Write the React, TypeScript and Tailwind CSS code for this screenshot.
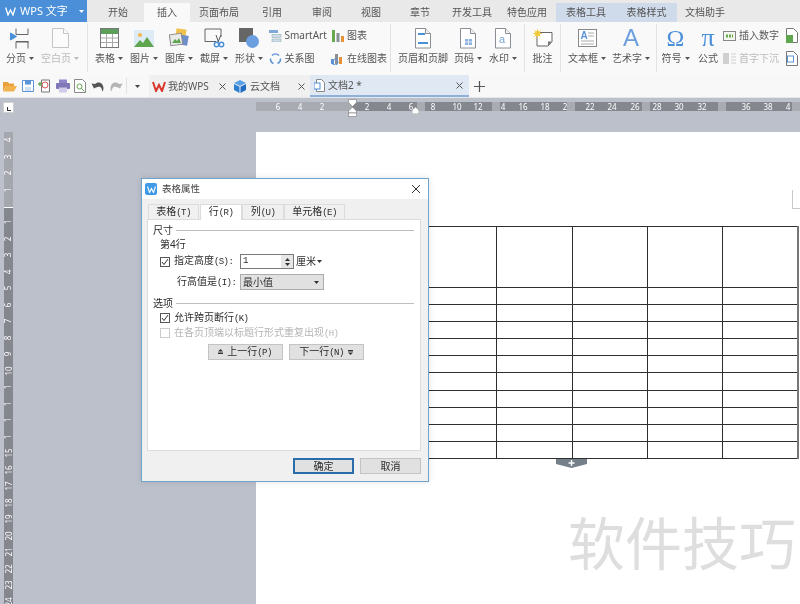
import React from "react";

const Caret = ({ c = "#555" }: { c?: string }) => (
  <svg width="5" height="3" viewBox="0 0 5 3" className="shrink-0"><path d="M0 0h5L2.500 3z" fill={c} /></svg>
);

const Sep = () => <div className="w-px h-[48px] mt-[2px] bg-[#e2e2e2] shrink-0" />;

const Big = ({ w, icon, label, caret, off }: { w: string; icon: React.ReactNode; label: string; caret?: boolean; off?: boolean }) => (
  <div className={`${w} shrink-0 flex flex-col items-center`}>
    <div className="h-[22px] mt-[5px] flex items-center justify-center">{icon}</div>
    <div className={`mt-[2px] h-[14px] flex items-center gap-[3px] text-[10px] whitespace-nowrap ${off ? "text-[#bbbbbb]" : "text-[#555555]"}`}>
      {label}
      {caret && <Caret c={off ? "#bbb" : "#555"} />}
    </div>
  </div>
);

const Small = ({ icon, label, off }: { icon: React.ReactNode; label: string; off?: boolean }) => (
  <div className={`h-[23px] flex items-center gap-[3px] text-[10px] whitespace-nowrap ${off ? "text-[#bbbbbb]" : "text-[#555555]"}`}>
    <span className="w-[13px] h-[14px] flex items-center justify-center shrink-0">{icon}</span>
    {label}
  </div>
);

const PageIco = ({ children, stroke = "#8a8f96" }: { children?: React.ReactNode; stroke?: string }) => (
  <svg width="18" height="21" viewBox="0 0 18 21">
    <path d="M1.500.5h10l5 5v14.500h-15z" fill="#fff" stroke={stroke} />
    <path d="M11.500.5v5h5" fill="#f2f2f2" stroke={stroke} />
    {children}
  </svg>
);

const icons = {
  page: (
    <svg width="21" height="21" viewBox="0 0 21 21" fill="none" stroke="#666">
      <path d="M6 .5v6h12v-6M6 20.500v-7h12v7M6 14h13" />
      <path d="M.5 5l6 3.500-6 3.500z" fill="#4a90d9" stroke="#4a90d9" />
    </svg>
  ),
  blank: (
    <svg width="17" height="20" viewBox="0 0 17 20" fill="#fbfbfb" stroke="#c4c4c4">
      <path d="M.5.5h11l5 5v14h-16z" />
      <path d="M11.500.5v5h5" />
    </svg>
  ),
  table: (
    <svg width="19" height="20" viewBox="0 0 19 20">
      <rect x=".5" y=".5" width="18" height="19" fill="#fff" stroke="#777" />
      <rect x="1" y="1" width="17" height="5" fill="#5d9f5a" />
      <path d="M1 10h17M1 14.500h17M6.500 6v13M12.500 6v13" stroke="#a9a9a9" />
    </svg>
  ),
  picture: (
    <svg width="20" height="17" viewBox="0 0 20 17">
      <rect width="20" height="17" fill="#dcebf5" />
      <circle cx="6" cy="5" r="2" fill="#f2b84b" />
      <path d="M0 17l6-7 3 3 4-6 7 10z" fill="#5fa64f" />
    </svg>
  ),
  gallery: (
    <svg width="20" height="20" viewBox="0 0 20 20">
      <rect x="7" y="1" width="10" height="8" fill="#f0c14b" transform="rotate(8 12 5)" />
      <rect x="10" y="7" width="9" height="10" fill="#6f8fc9" transform="rotate(10 14 12)" />
      <rect x="1" y="6" width="12" height="11" fill="#eaeaea" stroke="#888" transform="rotate(-8 7 11)" />
      <path d="M3 15l3-4 2 2 2-3 2 5z" fill="#5fa64f" />
    </svg>
  ),
  shot: (
    <svg width="21" height="20" viewBox="0 0 21 20" fill="none">
      <path d="M12 13.500H1V1h16v8" stroke="#666" />
      <path d="M12 7l2.500 7M17 7l-3 7" stroke="#555" />
      <circle cx="12.500" cy="16.500" r="2.200" stroke="#4a90d9" strokeWidth="1.400" />
      <circle cx="17.500" cy="16.500" r="2.200" stroke="#4a90d9" strokeWidth="1.400" />
    </svg>
  ),
  shape: (
    <svg width="20" height="20" viewBox="0 0 20 20">
      <rect width="14" height="14" fill="#666" />
      <circle cx="13.500" cy="13.500" r="6.500" fill="#6c9fe0" />
    </svg>
  ),
  smart: (
    <svg width="13" height="12" viewBox="0 0 13 12">
      <rect x="0" y="0" width="9" height="3" fill="#7fa8d8" />
      <rect x="3" y="4.500" width="9" height="3" fill="#cfdcec" stroke="#8aa" strokeWidth=".5" />
      <rect x="3" y="9" width="9" height="3" fill="#cfdcec" stroke="#8aa" strokeWidth=".5" />
    </svg>
  ),
  cycle: (
    <svg width="13" height="13" viewBox="0 0 13 13" fill="none" stroke="#5b93d6" strokeWidth="1.500">
      <path d="M3 3.500A5 5 0 0 1 10 3.500" />
      <path d="M11.500 6.500A5 5 0 0 1 8.500 11.500" />
      <path d="M4.500 11.500A5 5 0 0 1 1.500 6.500" />
    </svg>
  ),
  chart: (
    <svg width="12" height="12" viewBox="0 0 12 12">
      <rect x="0" y="0" width="3" height="12" fill="#6aa84f" />
      <rect x="4.500" y="3" width="3" height="9" fill="#8a8f96" />
      <rect x="9" y="6" width="3" height="6" fill="#e69138" />
    </svg>
  ),
  online: (
    <svg width="13" height="13" viewBox="0 0 13 13">
      <rect x="0" y="7" width="3" height="5" fill="#5b93d6" />
      <rect x="4" y="2" width="3" height="10" fill="#8a8f96" />
      <rect x="8" y="5" width="3" height="7" fill="#e69138" />
      <circle cx="4" cy="10" r="3" fill="none" stroke="#5b93d6" />
    </svg>
  ),
  header: (
    <PageIco>
      <rect x="4" y="5" width="7" height="2" fill="#4a90d9" />
      <rect x="4" y="14" width="10" height="2" fill="#4a90d9" />
    </PageIco>
  ),
  pageNo: (
    <PageIco>
      <rect x="6" y="11" width="7" height="6" fill="#8fb3e0" />
      <path d="M9.500 11v6M6 14h7" stroke="#fff" strokeWidth=".7" />
    </PageIco>
  ),
  water: (
    <PageIco>
      <text x="5" y="15" fontSize="11" fill="#7ba4d8" fontFamily="Liberation Sans">a</text>
    </PageIco>
  ),
  note: (
    <svg width="20" height="18" viewBox="0 0 20 18">
      <path d="M4 3.500h15v9l-4 4.500H4z" fill="#fff" stroke="#666" />
      <path d="M15 17v-4.500h4z" fill="#777" />
      <circle cx="4.500" cy="4.500" r="2.800" fill="#f6d24a" />
      <path d="M4.500 0v9M0 4.500h9M1.300 1.300l6.400 6.400M7.700 1.300l-6.400 6.400" stroke="#f0c93a" strokeWidth=".8" />
    </svg>
  ),
  box: (
    <svg width="19" height="18" viewBox="0 0 19 18">
      <rect x=".5" y=".5" width="18" height="17" fill="#fff" stroke="#888" />
      <text x="2.500" y="10" fontSize="10" fill="#5b93d6" fontFamily="Liberation Sans" fontWeight="700">A</text>
      <path d="M10 4h6M10 7h6M3 12h13M3 15h13" stroke="#aaa" />
    </svg>
  ),
  num: (
    <svg width="13" height="10" viewBox="0 0 13 10">
      <rect x=".5" y=".5" width="12" height="9" fill="#f3f7ef" stroke="#888" />
      <path d="M3 5h7" stroke="#6aa84f" strokeWidth="3" strokeDasharray="2 1" />
    </svg>
  ),
  drop: (
    <svg width="13" height="11" viewBox="0 0 13 11">
      <rect x="0" y="0" width="6" height="11" fill="#d0d0d0" />
      <path d="M8 1h5M8 4h5M8 7h5M8 10h5" stroke="#cfcfcf" />
    </svg>
  ),
  attach: (
    <svg width="12" height="15" viewBox="0 0 12 15">
      <path d="M.5.500h7l4 4v10h-11z" fill="#fff" stroke="#777" />
      <rect x="0" y="7" width="7" height="8" fill="#5fa64f" />
    </svg>
  ),
  obj: (
    <svg width="12" height="15" viewBox="0 0 12 15">
      <path d="M.5.500h7l4 4v10h-11z" fill="#fff" stroke="#777" />
      <rect x="1.500" y="5" width="6" height="6" fill="#fff" stroke="#5b93d6" />
    </svg>
  ),
};

const Q = ({ children }: { children: React.ReactNode }) => (
  <svg width="14" height="14" viewBox="0 0 14 14" className="shrink-0">{children}</svg>
);

const quick = [
  <Q><path d="M0 3h5l1 1.500h5V7H3L0 12z" fill="#e9a23b" /><path d="M3 7h11l-3 5.500H0z" fill="#f0b34d" /></Q>,
  <Q><path d="M1.500 1.500h11v11h-11z" fill="#fff" stroke="#5b93d6" /><rect x="4" y="2" width="6" height="3.500" fill="#5b93d6" /><rect x="4" y="8" width="6" height="4" fill="#cfe0f3" /></Q>,
  <Q><path d="M3.500 1h8v12h-8z" fill="#fff" stroke="#777" /><circle cx="7" cy="6" r="3" fill="none" stroke="#d9534f" /><path d="M0 5h4M2 3v4" stroke="#5fa64f" strokeWidth="1.300" /></Q>,
  <Q><rect x="3" y="0.500" width="8" height="4" fill="#8f87c9" /><rect x="0" y="4" width="14" height="6" rx="1" fill="#7f78b8" /><rect x="3" y="8.500" width="8" height="5" fill="#cfcbe8" /></Q>,
  <Q><path d="M1.500.5h8l3 3v10h-11z" fill="#fff" stroke="#888" /><circle cx="6.500" cy="7.500" r="2.500" fill="none" stroke="#5fa64f" /><path d="M8.500 9.500l3 3" stroke="#5fa64f" /></Q>,
  <Q><path d="M3 9.500l-2.500-5 3.500.5C6 2.500 12 2.500 12.500 9c.2 2-.8 3-1.500 3.500.2-3-1-6-6-4z" fill="#555" /></Q>,
  <Q><path d="M11 9.500l2.500-5-3.500.5C8 2.500 2 2.500 1.500 9c-.2 2 .8 3 1.500 3.500-.2-3 1-6 6-4z" fill="#b5b5b5" /></Q>,
];

const topTabs: [string, string][] = [
  ["开始", "w-[52px]"],
  ["插入", "w-[46px]"],
  ["页面布局", "w-[58px]"],
  ["引用", "w-[48px]"],
  ["审阅", "w-[52px]"],
  ["视图", "w-[46px]"],
  ["章节", "w-[52px]"],
  ["开发工具", "w-[52px]"],
  ["特色应用", "w-[58px]"],
  ["表格工具", "w-[60px]"],
  ["表格样式", "w-[61px]"],
  ["文档助手", "w-[56px]"],
];

const rulerLabels: [number, string][] = [
  [22, "6"], [44, "4"], [66, "2"], [111, "2"], [133, "4"], [155, "6"], [177, "8"], [201, "10"], [222, "12"],
  [247, "4"], [267, "16"], [289, "18"], [309, "2"], [334, "22"], [356, "24"], [379, "26"], [401, "28"],
  [423, "30"], [446, "32"], [490, "36"], [512, "38"], [532, "4"],
];
const rulerSegs = ["w-[65px]", "w-[67px]", "w-[67px]", "w-[67px]", "w-[68px]", "w-[66px]"];

const vTop = ["4", "3", "2", "1"];
const vBottom = ["1", "2", "3", "4", "5", "6", "7", "8", "9", "10", "1", "1", "1", "1", "15", "16", "17", "18", "19", "20", "21", "22", "23", "24"];

const VNum = ({ n }: { n: string }) => (
  <div className="h-[16.500px] w-full flex items-center justify-center shrink-0">
    <span className="-rotate-90 text-[8px] leading-none text-white">{n}</span>
  </div>
);

const rowHeights = ["h-[61px]", "h-[17px]", "h-[17px]", "h-[17px]", "h-[17px]", "h-[17px]", "h-[18px]", "h-[17px]", "h-[17px]", "h-[17px]", "h-[17px]"];
const colWidths = ["w-[75px]", "w-[75px]", "w-[76px]", "w-[75px]", "w-[75px]", "w-[75px]"];

const M = ({ children }: { children: React.ReactNode }) => (
  <span className="font-['Liberation_Mono',monospace] text-[9px] tracking-[-0.6px]">{children}</span>
);

const Check = ({ off }: { off?: boolean }) => (
  <span className={`w-[10px] h-[10px] border shrink-0 flex items-center justify-center bg-white ${off ? "border-[#cccccc]" : "border-[#555555]"}`}>
    {!off && (
      <svg width="8" height="8" viewBox="0 0 8 8" fill="none"><path d="M1 4l2 2.500L7 1" stroke="#333" strokeWidth="1" /></svg>
    )}
  </span>
);

const Legend = ({ label }: { label: string }) => (
  <div className="h-[14px] flex items-center gap-[3px] pl-[5px] pr-[6px]">
    <span>{label}</span>
    <span className="flex-1 h-px bg-[#bdbdbd]" />
  </div>
);

const DArrow = ({ up }: { up?: boolean }) => (
  <svg width="5" height="6" viewBox="0 0 5 6" fill="#333" className={up ? "" : "rotate-180"}>
    <path d="M2.500 0L5 2.500H0z" /><path d="M0 3.500h5L5 5H0z" />
  </svg>
);

const Dlg = () => (
  <div className="absolute left-[141px] top-[178px] w-[288px] h-[304px] border border-[#6fa4cf] bg-[#f0f0f0] flex flex-col text-[10px] text-[#2b2b2b] shadow-[0_0_6px_rgba(0,0,0,0.12)]">
    <div className="h-[20px] bg-white flex items-center pl-[3px] pr-[6px] shrink-0">
      <span className="w-[12px] h-[12px] rounded-[2px] bg-[#3f9be8] flex items-center justify-center">
        <svg width="9" height="7" viewBox="0 0 9 7" fill="none"><path d="M.5.500l2 6 2-4 2 4 2-6" stroke="#fff" strokeWidth="1.100" /></svg>
      </span>
      <span className="ml-[5px] text-[9.500px] text-[#444444]">表格属性</span>
      <svg width="10" height="10" viewBox="0 0 10 10" className="ml-auto mr-[1px]"><path d="M1 1l8 8M9 1l-8 8" stroke="#333" /></svg>
    </div>
    <div className="flex h-[20px] items-end pl-[6px] shrink-0">
      <div className="w-[51px] h-[15px] bg-[#f0f0f0] border border-b-0 border-[#dcdcdc] flex items-center justify-center"><span>表格<M>(T)</M></span></div>
      <div className="ml-px w-[42px] h-[16px] bg-white border border-b-0 border-[#dcdcdc] flex items-center justify-center relative top-px"><span>行<M>(R)</M></span></div>
      <div className="w-[42px] h-[15px] bg-[#f0f0f0] border border-b-0 border-[#dcdcdc] flex items-center justify-center"><span>列<M>(U)</M></span></div>
      <div className="w-[61px] h-[15px] bg-[#f0f0f0] border border-b-0 border-[#dcdcdc] flex items-center justify-center"><span>单元格<M>(E)</M></span></div>
    </div>
    <div className="ml-[5px] w-[274px] h-[232px] bg-white border border-[#dcdcdc] pt-[3px] shrink-0">
      <Legend label="尺寸" />
      <div className="h-[14px] flex items-center pl-[12px]">第4行</div>
      <div className="mt-[3px] h-[15px] flex items-center pl-[12px]">
        <Check />
        <span className="ml-[4px] w-[66px]">指定高度<M>(S):</M></span>
        <div className="w-[54px] h-[15px] border border-[#7a7a7a] flex items-center justify-between pl-[2px]">
          <M>1</M>
          <div className="w-[12px] h-full bg-[#e6e6e6] flex flex-col items-center justify-center gap-[2px]">
            <span className="rotate-180"><Caret c="#333" /></span>
            <Caret c="#333" />
          </div>
        </div>
        <span className="ml-[2px] flex items-center gap-[1px]">厘米<Caret c="#333" /></span>
      </div>
      <div className="mt-[5px] h-[16px] flex items-center pl-[29px]">
        <span className="w-[63px]">行高值是<M>(I):</M></span>
        <div className="w-[84px] h-[16px] bg-[#e1e1e1] border border-[#adadad] flex items-center justify-between pl-[2px] pr-[4px]">
          最小值
          <Caret c="#333" />
        </div>
      </div>
      <div className="mt-[6px]"><Legend label="选项" /></div>
      <div className="mt-px h-[14px] flex items-center pl-[12px] gap-[4px]"><Check /><span>允许跨页断行<M>(K)</M></span></div>
      <div className="h-[16px] flex items-center pl-[12px] gap-[4px] text-[#b5b5b5]"><Check off /><span>在各页顶端以标题行形式重复出现<M>(H)</M></span></div>
      <div className="mt-[3px] flex justify-center gap-[6px] pl-[3px]">
        <div className="w-[75px] h-[16px] bg-[#e1e1e1] border border-[#c4c4c4] flex items-center justify-center gap-[4px]"><DArrow up /><span>上一行<M>(P)</M></span></div>
        <div className="w-[75px] h-[16px] bg-[#e1e1e1] border border-[#c4c4c4] flex items-center justify-center gap-[4px]"><span>下一行<M>(N)</M></span><DArrow /></div>
      </div>
    </div>
    <div className="mt-[7px] flex justify-end gap-[6px] pr-[7px]">
      <div className="w-[61px] h-[16px] bg-[#e1e1e1] border-2 border-[#2b6cab] flex items-center justify-center">确定</div>
      <div className="w-[61px] h-[16px] bg-[#e1e1e1] border border-[#c4c4c4] flex items-center justify-center">取消</div>
    </div>
  </div>
);

export default function App() {
  return (
    <div className="relative w-[800px] h-[604px] overflow-hidden flex flex-col bg-[#bcc0cb] blur-[0.3px] font-['Noto_Sans','Noto_Sans_CJK_SC',sans-serif]">
      {/* title tabs */}
      <div className="h-[22px] flex bg-[#e9e9e9] shrink-0">
        <div className="w-[87px] h-full bg-[#4a8fd8] flex items-center text-white shrink-0">
          <svg width="11" height="9" viewBox="0 0 11 9" fill="none" className="ml-[5px]"><path d="M.7.500l2.300 7.500 2.500-5 2.500 5L10.300.500" stroke="#fff" strokeWidth="1.300" /></svg>
          <span className="ml-[4px] text-[11px] whitespace-nowrap">WPS 文字</span>
          <span className="ml-auto mr-[3px]"><Caret c="#fff" /></span>
        </div>
        <div className="w-[5px] shrink-0" />
        {topTabs.map(([t, w]) => (
          <div
            key={t}
            className={`${w} shrink-0 mt-[3px] flex items-center justify-center text-[10px] text-[#555555] ${t === "插入" ? "bg-[#f9f9f9] text-[#3f7fc4]" : ""} ${t === "表格工具" || t === "表格样式" ? "bg-[#cfdbea]" : ""}`}
          >
            {t}
          </div>
        ))}
      </div>

      {/* ribbon */}
      <div className="h-[53px] flex bg-[#f9f9f9] shrink-0 overflow-hidden">
        <Big w="w-[40px]" icon={icons.page} label="分页" caret />
        <Big w="w-[40px]" icon={icons.blank} label="空白页" caret off />
        <div className="w-[7px] shrink-0" />
        <Sep />
        <div className="w-[3.500px] shrink-0" />
        <Big w="w-[35px]" icon={icons.table} label="表格" caret />
        <Big w="w-[35px]" icon={icons.picture} label="图片" caret />
        <Big w="w-[35px]" icon={icons.gallery} label="图库" caret />
        <Big w="w-[35px]" icon={icons.shot} label="截屏" caret />
        <Big w="w-[35px]" icon={icons.shape} label="形状" caret />
        <div className="w-[64.500px] shrink-0 pl-[2px] pt-[2px]">
          <Small icon={icons.smart} label="SmartArt" />
          <Small icon={icons.cycle} label="关系图" />
        </div>
        <div className="w-[59px] shrink-0 pt-[2px]">
          <Small icon={icons.chart} label="图表" />
          <Small icon={icons.online} label="在线图表" />
        </div>
        <Sep />
        <div className="w-[7px] shrink-0" />
        <Big w="w-[50px]" icon={icons.header} label="页眉和页脚" />
        <div className="w-[2.500px] shrink-0" />
        <Big w="w-[35px]" icon={icons.pageNo} label="页码" caret />
        <Big w="w-[35px]" icon={icons.water} label="水印" caret />
        <div className="w-[3.500px] shrink-0" />
        <Sep />
        <Big w="w-[35px]" icon={icons.note} label="批注" />
        <Sep />
        <div className="w-[4px] shrink-0" />
        <Big w="w-[44px]" icon={icons.box} label="文本框" caret />
        <Big w="w-[44px]" icon={<span className="block h-[22px] text-[24px] leading-[22px] text-[#6c9fe0] font-['Liberation_Sans',sans-serif]">A</span>} label="艺术字" caret />
        <div className="w-[3px] shrink-0" />
        <Sep />
        <div className="w-[1px] shrink-0" />
        <Big w="w-[35px]" icon={<span className="block h-[22px] text-[24px] leading-[22px] text-[#4a90d9] font-['Liberation_Serif',serif]">Ω</span>} label="符号" caret />
        <Big w="w-[30px]" icon={<span className="block h-[22px] text-[26px] leading-[22px] text-[#4a90d9] font-['Liberation_Serif',serif]">π</span>} label="公式" />
        <div className="w-[61px] shrink-0 pt-[2px]">
          <Small icon={icons.num} label="插入数字" />
          <Small icon={icons.drop} label="首字下沉" off />
        </div>
        <div className="shrink-0 pt-[2px] pl-px">
          <Small icon={icons.attach} label="附件" />
          <Small icon={icons.obj} label="对象" />
        </div>
      </div>

      {/* document tabs */}
      <div className="h-[22px] flex items-center bg-[#f8f8f8] shrink-0">
        <div className="flex items-center gap-[3.600px] pl-[3px] w-[126px] shrink-0">
          {quick.map((q, i) => (
            <React.Fragment key={i}>{q}</React.Fragment>
          ))}
        </div>
        <div className="w-px h-[16px] bg-[#e0e0e0] shrink-0" />
        <div className="w-[22px] flex justify-center shrink-0 pr-[2px]"><Caret c="#444" /></div>
        <div className="w-[83px] h-full bg-[#f0f0f0] flex items-center pl-[3px] pr-[6px] text-[10px] text-[#555555] shrink-0">
          <svg width="14" height="11" viewBox="0 0 14 11" fill="none"><path d="M1 1l3 9 3-6 3 6 3-9" stroke="#d9352b" strokeWidth="2" /></svg>
          <span className="ml-[2px]">我的WPS</span>
          <svg width="7" height="7" viewBox="0 0 7 7" className="ml-auto"><path d="M.5.500l6 6M6.500.500l-6 6" stroke="#555" /></svg>
        </div>
        <div className="w-[78px] h-full bg-[#f0f0f0] flex items-center pl-[2px] pr-[5px] text-[10px] text-[#555555] shrink-0">
          <svg width="12" height="13" viewBox="0 0 12 13"><path d="M6 0l6 3-6 3-6-3z" fill="#5aa0e6" /><path d="M0 4l5.500 2.800V13L0 10z" fill="#2f7fd1" /><path d="M12 4L6.500 6.800V13L12 10z" fill="#1f6cc0" /></svg>
          <span className="ml-[4px]">云文档</span>
          <svg width="7" height="7" viewBox="0 0 7 7" className="ml-auto"><path d="M.5.500l6 6M6.500.500l-6 6" stroke="#555" /></svg>
        </div>
        <div className="w-[159px] h-full bg-[#e0e8f3] border-b-2 border-[#8fb0d8] flex items-center pl-[4px] pr-[6px] text-[10px] text-[#555555] shrink-0">
          <svg width="11" height="13" viewBox="0 0 11 13"><path d="M2.500.5h5l3 3v9h-8z" fill="#fff" stroke="#888" /><rect x="0" y="4" width="6" height="6" fill="#fff" stroke="#4a8fd8" /></svg>
          <span className="ml-[3px]">文档2 *</span>
          <svg width="7" height="7" viewBox="0 0 7 7" className="ml-auto"><path d="M.5.500l6 6M6.500.500l-6 6" stroke="#555" /></svg>
        </div>
        <svg width="11" height="11" viewBox="0 0 11 11" className="ml-[5px]"><path d="M5.500 0v11M0 5.500h11" stroke="#555" strokeWidth="1.200" /></svg>
      </div>

      {/* horizontal ruler strip */}
      <div className="h-[35px] flex shrink-0 pt-[4px] border-t border-[#e4e6ea]">
        <div className="w-[256px] shrink-0 pl-[3px]">
          <div className="w-[11px] h-[11px] bg-white border border-[#d0d0d0] flex items-end justify-center pb-[1px]">
            <span className="block w-[4px] h-[4px] border-l border-b border-[#333]" />
          </div>
        </div>
        <div className="relative flex-1 h-[9px] flex bg-[#a9abb2]">
          <div className="w-[96px] shrink-0" />
          {rulerSegs.map((w, i) => (
            <div key={i} className={`${w} h-full bg-[#85878f] mr-[8px] shrink-0`} />
          ))}
          {rulerLabels.map(([x, l], i) => (
            <span key={i} className="absolute top-0 h-[9px] w-[16px] -ml-[8px] text-center text-[8px] leading-[9px] text-white" style={{ left: x }}>{l}</span>
          ))}
          <svg width="9" height="18" viewBox="0 0 9 18" className="absolute left-[92px] -top-[3px]">
            <path d="M.5.500h8v3l-4 4-4-4z" fill="#fff" stroke="#777" strokeWidth=".6" />
            <path d="M4.500 8l4 4v2h-8v-2z" fill="#fff" stroke="#777" strokeWidth=".6" />
            <rect x=".5" y="14" width="8" height="3.500" fill="#fff" stroke="#777" strokeWidth=".6" />
          </svg>
          <svg width="7" height="7" viewBox="0 0 7 7" className="absolute left-[156px] top-[5px]">
            <path d="M3.500 0L7 3v4H0V3z" fill="#fff" stroke="#777" strokeWidth=".6" />
          </svg>
        </div>
      </div>

      {/* workspace */}
      <div className="flex-1 flex min-h-0">
        <div className="w-[256px] shrink-0 pl-[4px] overflow-hidden">
          <div className="w-[9px] flex flex-col">
            <div className="h-[75px] bg-[#a5a7ae] overflow-hidden">
              {vTop.map((n, i) => <VNum key={i} n={n} />)}
            </div>
            <div className="h-px bg-white" />
            <div className="h-[400px] bg-[#85878f] pt-[6px]">
              {vBottom.map((n, i) => <VNum key={i} n={n} />)}
            </div>
          </div>
        </div>
        <div className="relative flex-1 bg-white pt-[94px] pl-[90px] overflow-hidden">
          <table className="table-fixed border-collapse w-[451px]">
            <colgroup>
              {colWidths.map((w, i) => <col key={i} className={w} />)}
            </colgroup>
            <tbody>
              {rowHeights.map((h, r) => (
                <tr key={r} className={h}>
                  {colWidths.map((_, c) => (
                    <td key={c} className="border border-[#2e2e2e] p-0 last:border-r-2 last:border-r-[#777777]" />
                  ))}
                </tr>
              ))}
            </tbody>
          </table>
          <div className="absolute left-[536px] top-[58px] w-[10px] h-[19px] border-l border-b border-[#c8c8c8]" />
          <svg width="31" height="9" viewBox="0 0 31 9" className="absolute left-[300px] top-[327px]">
            <path d="M0 0h31v5l-15.500 4L0 5z" fill="#75808a" />
            <path d="M15.500 1v6M12.500 4h6" stroke="#fff" strokeWidth="1.400" />
          </svg>
          <div className="absolute left-[312px] top-[383px] text-[57px] leading-none text-[#dedede] whitespace-nowrap">软件技巧</div>
        </div>
      </div>

      <Dlg />
    </div>
  );
}
